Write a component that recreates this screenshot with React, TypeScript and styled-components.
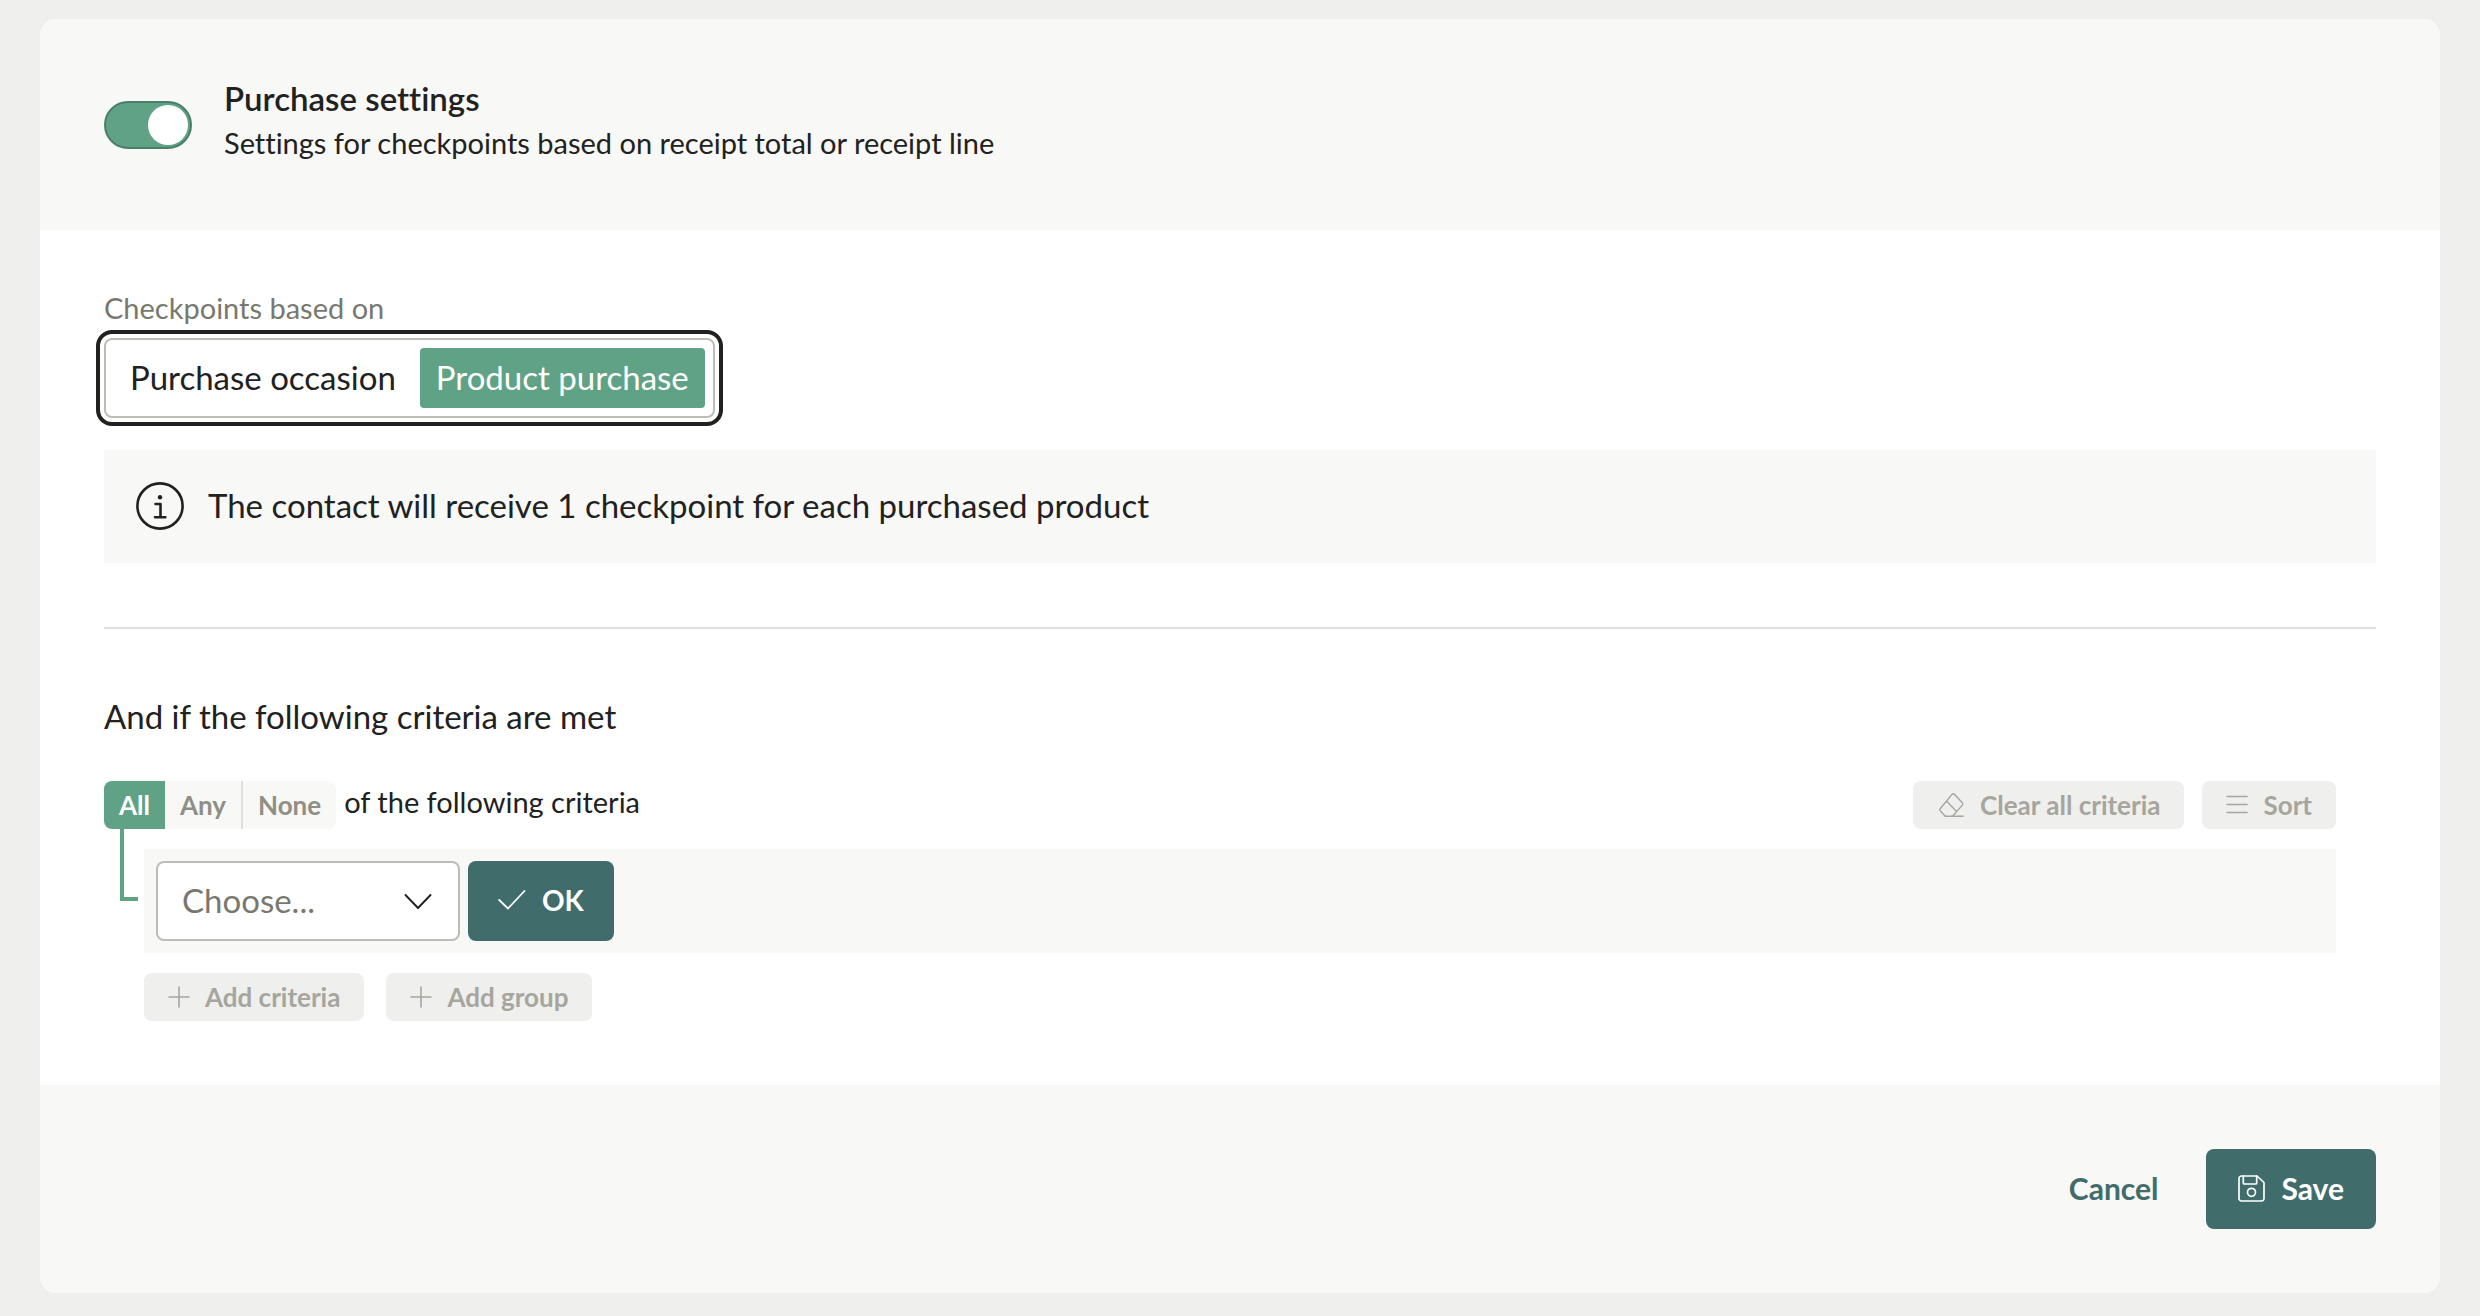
import React, { useState } from "react";
import styled, { createGlobalStyle, css } from "styled-components";

const color = {
  page: "#efefed",
  panel: "#f8f8f6",
  white: "#ffffff",
  ink: "#21211f",
  label: "#787870",
  muted: "#8f8f86",
  disabled: "#a6a69e",
  line: "#e0e0de",
  border: "#bdbdb7",
  green: "#60a286",
  greenDark: "#4a7f69",
  teal: "#416c6c",
};

const GlobalStyle = createGlobalStyle`
  *, *::before, *::after { box-sizing: border-box; }
  body {
    margin: 0;
    background: ${color.page};
    color: ${color.ink};
    font-family: Lato, "Open Sans", sans-serif;
    font-size: 33px;
    font-variant-ligatures: none;
    -webkit-font-smoothing: antialiased;
  }
  button, input, select { font: inherit; color: inherit; }
  h2, h3, p { margin: 0; }
`;

const Page = styled.main`
  padding: 19px 40px 23px;
`;

const Card = styled.form`
  background: ${color.white};
  border-radius: 16px;
  overflow: hidden;
`;

const Header = styled.header`
  display: flex;
  align-items: center;
  gap: 32px;
  padding: 64px;
  background: ${color.panel};
`;

const HeaderText = styled.div`
  display: flex;
  flex-direction: column;
  gap: 12px;
  padding-bottom: 5px;
`;

const Title = styled.h2`
  font-size: 33px;
  line-height: 30px;
  font-weight: 600;
`;

const Subtitle = styled.p`
  font-size: 29px;
  line-height: 36px;
`;

const Switch = styled.input`
  appearance: none;
  flex: none;
  display: flex;
  align-items: center;
  width: 88px;
  height: 48px;
  margin: 0;
  padding: 2px;
  border: 2px solid ${color.greenDark};
  border-radius: 24px;
  background: ${color.green};
  cursor: pointer;

  &::before {
    content: "";
    width: 40px;
    height: 40px;
    border-radius: 50%;
    background: ${color.white};
  }
  &:checked { justify-content: flex-end; }
`;

const Body = styled.div`
  padding: 64px;
`;

const Group = styled.fieldset`
  margin: 0;
  padding: 0;
  border: 0;
  min-width: 0;
`;

const GroupLabel = styled.legend`
  padding: 0;
  margin-bottom: 16px;
  font-size: 29px;
  line-height: 28px;
  color: ${color.label};
`;

const Segmented = styled.div`
  display: inline-flex;
  gap: 8px;
  height: 80px;
  padding: 8px;
  border: 2px solid ${color.border};
  border-radius: 8px;
  outline: 4px solid ${color.ink};
  outline-offset: 4px;
  vertical-align: top;
`;

const HiddenRadio = styled.input`
  appearance: none;
  position: absolute;
  width: 1px;
  height: 1px;
  margin: 0;
  opacity: 0;
`;

const Segment = styled.label<{ $on: boolean }>`
  display: flex;
  align-items: center;
  padding: 0 16px 2px;
  border-radius: 4px;
  line-height: 58px;
  cursor: pointer;
  ${(p) => p.$on && css`
    background: ${color.green};
    color: ${color.white};
  `}
`;

const Info = styled.div`
  display: flex;
  align-items: center;
  gap: 24px;
  margin-top: 32px;
  padding: 32px 32px 33px;
  background: ${color.panel};
  line-height: 46px;
  & > p { padding-bottom: 2px; }
`;

const Divider = styled.hr`
  height: 2px;
  margin: 64px 0;
  border: 0;
  background: ${color.line};
`;

const SectionTitle = styled.h3`
  margin-bottom: 42px;
  font-size: 33px;
  line-height: 46px;
  font-weight: 400;
`;

const Criteria = styled.div`
  padding-right: 40px;
`;

const Toolbar = styled.div`
  display: flex;
  align-items: center;
  gap: 18px;
`;

const Match = styled.div`
  display: flex;
  align-items: flex-start;
  gap: 8px;
  margin-right: auto;
  font-size: 29px;
  line-height: 42px;
`;

const MatchGroup = styled.div`
  display: flex;
  height: 48px;
  border-radius: 8px;
  overflow: hidden;
  background: ${color.panel};
`;

const MatchOption = styled.label<{ $on: boolean }>`
  display: flex;
  align-items: center;
  padding: 0 15px;
  font-size: 26px;
  font-weight: 700;
  color: ${color.muted};
  cursor: pointer;
  & + & + & { border-left: 2px solid ${color.line}; }
  ${(p) => p.$on && css`
    background: ${color.green};
    color: ${color.white};
  `}
`;

const Nested = styled.div`
  display: grid;
  grid-template-columns: 24px 1fr;
  padding-left: 16px;
`;

const Connector = styled.div`
  width: 18px;
  height: 72px;
  border: solid ${color.green};
  border-width: 0 0 4px 4px;
`;

const NestedContent = styled.div`
  display: flex;
  flex-direction: column;
  gap: 20px;
  padding-top: 20px;
`;

const CriteriaRow = styled.div`
  display: flex;
  gap: 8px;
  padding: 12px;
  background: ${color.panel};
`;

const SelectBox = styled.div`
  display: grid;
  align-items: center;
  width: 304px;
  height: 80px;
  & > * { grid-area: 1 / 1; }
  & > svg {
    justify-self: end;
    margin-right: 28px;
    pointer-events: none;
  }
`;

const Select = styled.select`
  appearance: none;
  width: 100%;
  height: 100%;
  padding: 0 72px 2px 24px;
  border: 2px solid ${color.border};
  border-radius: 8px;
  background: ${color.white};
  color: ${color.label};
`;

const Button = styled.button<{ $kind: "primary" | "soft" | "link"; $compact?: boolean }>`
  display: inline-flex;
  align-items: center;
  border: 0;
  border-radius: 8px;
  font-weight: 700;
  white-space: nowrap;
  cursor: pointer;
  ${(p) => p.$kind === "soft" ? css`
    gap: 15px;
    height: 48px;
    padding: 0 24px;
    font-size: 26px;
    background: ${color.page};
    color: ${color.disabled};
    cursor: default;
  ` : css`
    gap: 16px;
    height: 80px;
    padding: 0 ${p.$compact ? 30 : 32}px;
    font-size: ${p.$compact ? 28 : 30}px;
    line-height: 78px;
    padding-bottom: 2px;
  `}
  ${(p) => p.$kind === "primary" && css`
    background: ${color.teal};
    color: ${color.white};
  `}
  ${(p) => p.$kind === "link" && css`
    padding: 0 16px 2px;
    background: transparent;
    color: ${color.teal};
  `}
`;

const Actions = styled.div`
  display: flex;
  gap: 22px;
`;

const Footer = styled.footer`
  display: flex;
  justify-content: flex-end;
  gap: 32px;
  padding: 64px;
  background: ${color.panel};
`;

const Glyph = styled.svg`
  flex: none;
  fill: none;
  stroke: currentColor;
  stroke-linecap: round;
  stroke-linejoin: round;
`;

const InfoIcon = () => (
  <Glyph width="48" height="48" viewBox="0 0 48 48" strokeWidth="2.6" aria-hidden="true">
    <circle cx="24" cy="24" r="22.6" />
    <path d="M19.5 22h5v13M19 35.2h10.4" />
    <circle cx="24" cy="15.2" r="2.2" fill="currentColor" stroke="none" />
  </Glyph>
);

const ChevronIcon = () => (
  <Glyph width="28" height="16" viewBox="0 0 28 16" strokeWidth="1.9" aria-hidden="true">
    <path d="M1.5 2 14 15 26.5 2" />
  </Glyph>
);

const CheckIcon = () => (
  <Glyph width="28" height="28" viewBox="0 0 28 28" strokeWidth="1.8" aria-hidden="true">
    <path d="M1.2 14 10 22.5 26.5 5" />
  </Glyph>
);

const PlusIcon = () => (
  <Glyph width="22" height="22" viewBox="0 0 22 22" strokeWidth="1.6" aria-hidden="true">
    <path d="M11 1v20M1 11h20" />
  </Glyph>
);

const EraserIcon = () => (
  <Glyph width="28" height="26" viewBox="0 0 28 26" strokeWidth="1.4" aria-hidden="true">
    <path d="M15.200 2.100q1-.8 2 0l8.300 8.800q.8 1 0 2L15.500 24.300H8.200l-5-5.500q-.9-1.100 0-2.100zM9.700 9.200l9.800 10.200M14.500 24.300h11.700" />
  </Glyph>
);

const SortIcon = () => (
  <Glyph width="22" height="20" viewBox="0 0 22 20" strokeWidth="1.6" aria-hidden="true">
    <path d="M1 1.500h20M1 9.500h20M1 17.500h20" />
  </Glyph>
);

const SaveIcon = () => (
  <Glyph width="27" height="27" viewBox="0 0 27 27" strokeWidth="1.7" aria-hidden="true">
    <path d="M3.500 1h15.500l7 6.500V23.500a2.500 2.500 0 0 1-2.500 2.500H3.500A2.500 2.500 0 0 1 1 23.500V3.500A2.500 2.500 0 0 1 3.500 1z" />
    <path d="M5.300 1v7q0 1 1 1h11.400q1 0 1-1V1" />
    <circle cx="13.500" cy="17.300" r="4" />
  </Glyph>
);

const basisOptions = ["Purchase occasion", "Product purchase"];
const matchOptions = ["All", "Any", "None"];

export default function App() {
  const [enabled, setEnabled] = useState(true);
  const [basis, setBasis] = useState("Product purchase");
  const [match, setMatch] = useState("All");

  return (
    <>
      <GlobalStyle />
      <Page>
        <Card onSubmit={(e: React.FormEvent) => e.preventDefault()}>
          <Header>
            <Switch
              type="checkbox"
              role="switch"
              aria-labelledby="purchase-title"
              checked={enabled}
              onChange={(e) => setEnabled(e.target.checked)}
            />
            <HeaderText>
              <Title id="purchase-title">Purchase settings</Title>
              <Subtitle>Settings for checkpoints based on receipt total or receipt line</Subtitle>
            </HeaderText>
          </Header>

          <Body>
            <Group>
              <GroupLabel>Checkpoints based on</GroupLabel>
              <Segmented>
                {basisOptions.map((option) => (
                  <Segment key={option} $on={basis === option}>
                    <HiddenRadio
                      type="radio"
                      name="basis"
                      checked={basis === option}
                      onChange={() => setBasis(option)}
                    />
                    {option}
                  </Segment>
                ))}
              </Segmented>
            </Group>

            <Info>
              <InfoIcon />
              <p>The contact will receive 1 checkpoint for each purchased product</p>
            </Info>

            <Divider />

            <SectionTitle>And if the following criteria are met</SectionTitle>

            <Criteria>
              <Toolbar>
                <Match>
                  <MatchGroup role="radiogroup" aria-label="Match">
                    {matchOptions.map((option) => (
                      <MatchOption key={option} $on={match === option}>
                        <HiddenRadio
                          type="radio"
                          name="match"
                          checked={match === option}
                          onChange={() => setMatch(option)}
                        />
                        {option}
                      </MatchOption>
                    ))}
                  </MatchGroup>
                  <span>of the following criteria</span>
                </Match>
                <Button type="button" $kind="soft" disabled><EraserIcon />Clear all criteria</Button>
                <Button type="button" $kind="soft" disabled><SortIcon />Sort</Button>
              </Toolbar>

              <Nested>
                <Connector />
                <NestedContent>
                  <CriteriaRow>
                    <SelectBox>
                      <Select aria-label="Criteria" defaultValue="">
                        <option value="">Choose...</option>
                      </Select>
                      <ChevronIcon />
                    </SelectBox>
                    <Button type="button" $kind="primary" $compact><CheckIcon />OK</Button>
                  </CriteriaRow>
                  <Actions>
                    <Button type="button" $kind="soft" disabled><PlusIcon />Add criteria</Button>
                    <Button type="button" $kind="soft" disabled><PlusIcon />Add group</Button>
                  </Actions>
                </NestedContent>
              </Nested>
            </Criteria>
          </Body>

          <Footer>
            <Button type="button" $kind="link">Cancel</Button>
            <Button type="submit" $kind="primary"><SaveIcon />Save</Button>
          </Footer>
        </Card>
      </Page>
    </>
  );
}
